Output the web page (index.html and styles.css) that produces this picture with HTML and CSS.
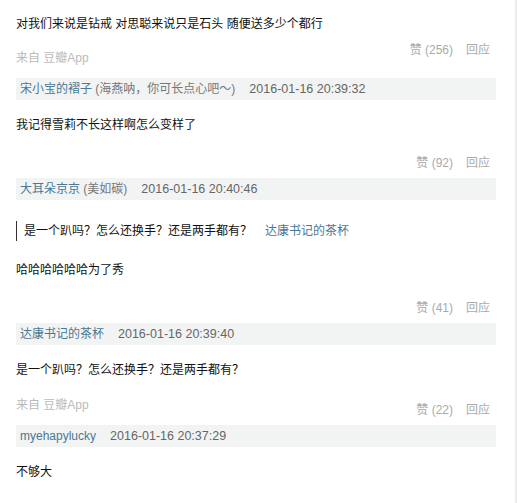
FILE: index.html
```html
<!DOCTYPE html>
<html lang="zh">
<head>
  <meta charset="UTF-8" />
  <title>评论</title>
  <link rel="stylesheet" href="styles.css">
</head>
<body>
  <div class="page">
    <div class="comment first">
      <p class="text">对我们来说是钻戒 对思聪来说只是石头 随便送多少个都行</p>
      <div class="foot">
        <span class="from">来自 豆瓣App</span>
        <span class="actions"><span>赞 (256)</span><span>回应</span></span>
      </div>
    </div>

    <div class="comment">
      <div class="meta"><a href="#">宋小宝的褶子</a> <span class="nick">(海燕呐，你可长点心吧～)</span><span class="time">2016-01-16 20:39:32</span></div>
      <p class="text">我记得雪莉不长这样啊怎么变样了</p>
      <div class="foot">
        <span></span>
        <span class="actions"><span>赞 (92)</span><span>回应</span></span>
      </div>
    </div>

    <div class="comment">
      <div class="meta"><a href="#">大耳朵京京</a> <span class="nick">(美如碳)</span><span class="time">2016-01-16 20:40:46</span></div>
      <div class="quote">是一个趴吗？怎么还换手？还是两手都有？<a href="#">达康书记的茶杯</a></div>
      <p class="text after-quote">哈哈哈哈哈哈为了秀</p>
      <div class="foot">
        <span></span>
        <span class="actions"><span>赞 (41)</span><span>回应</span></span>
      </div>
    </div>

    <div class="comment">
      <div class="meta"><a href="#">达康书记的茶杯</a><span class="time">2016-01-16 20:39:40</span></div>
      <p class="text">是一个趴吗？怎么还换手？还是两手都有？</p>
      <div class="foot low">
        <span class="from">来自 豆瓣App</span>
        <span class="actions"><span>赞 (22)</span><span>回应</span></span>
      </div>
    </div>

    <div class="comment">
      <div class="meta"><a href="#">myehapylucky</a><span class="time">2016-01-16 20:37:29</span></div>
      <p class="text">不够大</p>
    </div>
  </div>
</body>
</html>
```

FILE: styles.css
```css
body {
  margin: 0;
  background: #fff;
  color: #111;
  font-family: "Liberation Sans", "Noto Sans CJK SC", sans-serif;
  font-size: 12px;
  line-height: 20px;
}

a {
  color: #4a7895;
  text-decoration: none;
}

.page {
  width: 517px;
  height: 503px;
  padding: 14px 0 0 16px;
  box-sizing: border-box;
  border-right: 2px solid #ececec;
  overflow: hidden;
}

.comment {
  width: 480px;
}

.text {
  margin: 15px 0 0;
}

.first .text {
  margin-top: 0;
}

.meta {
  height: 22px;
  line-height: 22px;
  padding-left: 4px;
  background: #f2f4f4;
  font-size: 12px;
}

.nick {
  color: #777;
}

.time {
  color: #666;
  margin-left: 14px;
  font-size: 12.5px;
}

.quote {
  margin-top: 21px;
  padding-left: 7px;
  border-left: 1px solid #333;
}

.quote a {
  margin-left: 13px;
}

.after-quote {
  margin-top: 19px;
}

.foot {
  display: flex;
  justify-content: space-between;
  align-items: flex-start;
  margin: 18px 0 5px;
}

.first .foot {
  margin: 6px 0 10px;
}

.first .from {
  margin-top: 8px;
}

.foot.low {
  margin-top: 15px;
}

.foot.low .actions {
  margin-top: 5px;
}

.from {
  color: #bbb;
}

.actions {
  display: flex;
  gap: 13px;
  padding-right: 6px;
  color: #aaa;
}
```
